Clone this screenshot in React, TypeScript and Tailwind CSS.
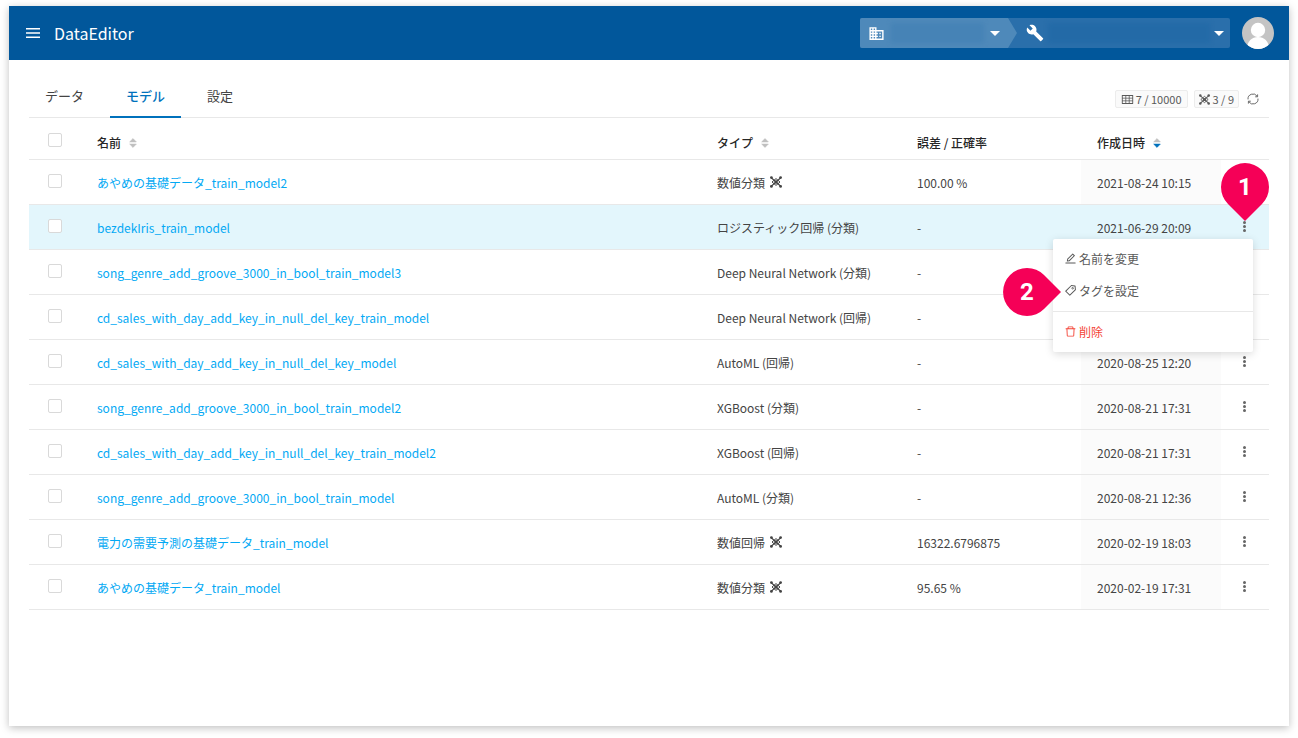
import React from 'react';
import { AiOutlineDelete, AiOutlineEdit, AiOutlineTable, AiOutlineTag } from 'react-icons/ai';
import { MdBuild, MdDomain } from 'react-icons/md';

interface Model {
  name: string;
  type: string;
  network?: boolean;
  score: string;
  createdAt?: string;
  selected?: boolean;
}

const models: Model[] = [
  { name: 'あやめの基礎データ_train_model2', type: '数値分類', network: true, score: '100.00 %', createdAt: '2021-08-24 10:15' },
  { name: 'bezdekIris_train_model', type: 'ロジスティック回帰 (分類)', score: '-', createdAt: '2021-06-29 20:09', selected: true },
  { name: 'song_genre_add_groove_3000_in_bool_train_model3', type: 'Deep Neural Network (分類)', score: '-' },
  { name: 'cd_sales_with_day_add_key_in_null_del_key_train_model', type: 'Deep Neural Network (回帰)', score: '-' },
  { name: 'cd_sales_with_day_add_key_in_null_del_key_model', type: 'AutoML (回帰)', score: '-', createdAt: '2020-08-25 12:20' },
  { name: 'song_genre_add_groove_3000_in_bool_train_model2', type: 'XGBoost (分類)', score: '-', createdAt: '2020-08-21 17:31' },
  { name: 'cd_sales_with_day_add_key_in_null_del_key_train_model2', type: 'XGBoost (回帰)', score: '-', createdAt: '2020-08-21 17:31' },
  { name: 'song_genre_add_groove_3000_in_bool_train_model', type: 'AutoML (分類)', score: '-', createdAt: '2020-08-21 12:36' },
  { name: '電力の需要予測の基礎データ_train_model', type: '数値回帰', network: true, score: '16322.6796875', createdAt: '2020-02-19 18:03' },
  { name: 'あやめの基礎データ_train_model', type: '数値分類', network: true, score: '95.65 %', createdAt: '2020-02-19 17:31' },
];

const NetworkIcon = ({ className }: { className: string }) => (
  <svg viewBox="0 0 12 12" className={className} fill="none" stroke="currentColor" aria-hidden="true">
    <path d="M1 1.5l10 9M11 1.5l-10 9" strokeWidth="1.1" />
    <path d="M6 2.6L10 6 6 9.4 2 6z" strokeWidth="1" />
    <circle cx="6" cy="6" r="1.7" fill="currentColor" stroke="none" />
    <g fill="currentColor" stroke="none">
      <circle cx="1.4" cy="1.6" r="1.4" />
      <circle cx="10.6" cy="1.6" r="1.4" />
      <circle cx="1.4" cy="10.4" r="1.4" />
      <circle cx="10.6" cy="10.4" r="1.4" />
    </g>
  </svg>
);

const ReloadIcon = () => (
  <svg viewBox="0 0 12 12" className="w-3 h-3" fill="none" stroke="currentColor" strokeWidth="0.9" aria-hidden="true">
    <path d="M1 6.4A5 5 0 0 1 10.2 3.3M11 5.6A5 5 0 0 1 1.8 8.7" />
    <path d="M10.6 1.4v2.4H8.2M1.4 10.6V8.2h2.4" />
  </svg>
);

const SortIcon = ({ desc }: { desc?: boolean }) => (
  <svg viewBox="0 0 8 10" className="w-2 h-2.5" strokeLinejoin="round" strokeWidth="0.6" aria-hidden="true">
    <path d="M4 0.6L7.3 3.9H0.7z" fill="#bfbfbf" stroke="#bfbfbf" />
    <path d="M4 9.4L7.3 6.1H0.7z" fill={desc ? '#0071bc' : '#bfbfbf'} stroke={desc ? '#0071bc' : '#bfbfbf'} />
  </svg>
);

const Caret = () => (
  <svg viewBox="0 0 10 5" className="w-2.5 h-[5px] shrink-0" fill="currentColor" aria-hidden="true">
    <path d="M0 0h10L5 5z" />
  </svg>
);

const Checkbox = ({ label }: { label: string }) => (
  <input
    type="checkbox"
    aria-label={label}
    className="appearance-none block w-3.5 h-3.5 ml-[3px] mb-0.5 bg-white border border-[#d9d9d9] rounded-xs checked:bg-[#0071bc]"
  />
);

const Header = () => (
  <header className="h-[54px] bg-[#01579b] text-white flex items-center justify-between pl-[17px] pr-[15px]">
    <div className="flex items-center gap-3.5">
      <button type="button" aria-label="メニュー">
        <svg viewBox="0 0 14 10" className="w-3.5 h-2.5" fill="currentColor" aria-hidden="true">
          <path d="M0 0h14v1.6H0zM0 4.2h14v1.6H0zM0 8.4h14V10H0z" />
        </svg>
      </button>
      <h1 className="text-base">DataEditor</h1>
    </div>
    <div className="flex items-center gap-3">
      <div className="flex h-[30px] rounded-xs overflow-hidden bg-[#2a6fab]">
        <button
          type="button"
          aria-label="組織"
          className="w-[157px] bg-[#4e89ba] flex items-center gap-1.5 pl-2 pr-[17px] [clip-path:polygon(0_0,148px_0,100%_50%,148px_100%,0_100%)]"
        >
          <MdDomain className="w-[17px] h-[17px] shrink-0" />
          <span className="flex-1 h-5 bg-[#4683b6] blur-[2px]" />
          <Caret />
        </button>
        <button type="button" aria-label="プロジェクト" className="w-[213px] flex items-center gap-1 pl-[9px] pr-1.5">
          <MdBuild className="w-[18px] h-[18px] shrink-0" />
          <span className="flex-1 h-5 bg-[#236aa7] blur-[2px]" />
          <Caret />
        </button>
      </div>
      <button type="button" aria-label="アカウント" className="w-8 h-8 rounded-full overflow-hidden">
        <svg viewBox="0 0 32 32" className="w-8 h-8" aria-hidden="true">
          <rect width="32" height="32" fill="#c4c4c4" />
          <circle cx="16" cy="13" r="7.2" fill="#fff" />
          <path d="M5 32c0-8 5-12 11-12s11 4 11 12z" fill="#fff" />
        </svg>
      </button>
    </div>
  </header>
);

const Pin = ({ number, className, shape }: { number: number; className: string; shape: string }) => (
  <div className={`absolute w-12 h-12 flex items-center justify-center ${className}`}>
    <svg viewBox="0 0 48 48" className="absolute w-12 h-12 overflow-visible" aria-hidden="true">
      <path d={shape} fill="#f50057" />
    </svg>
    <span className="relative text-white text-2xl font-bold [font-family:Roboto,sans-serif]">{number}</span>
  </div>
);

const RowMenu = () => (
  <div className="absolute right-4 top-[34px] z-10 w-[200px] py-1 bg-white rounded-xs shadow-[0_2px_8px_rgba(0,0,0,0.15)] text-[#595959]">
    <button type="button" className="w-full h-8 px-[11px] flex items-center gap-0.5">
      <AiOutlineEdit className="w-[13px] h-[13px]" />
      名前を変更
    </button>
    <button type="button" className="w-full h-8 px-[11px] flex items-center gap-0.5">
      <AiOutlineTag className="w-[13px] h-[13px]" />
      タグを設定
    </button>
    <hr className="my-1 border-[#e8e8e8]" />
    <button type="button" className="w-full h-8 px-[11px] flex items-center gap-0.5 text-[#f44336]">
      <AiOutlineDelete className="w-[13px] h-[13px]" />
      削除
    </button>
    <Pin
      number={2}
      className="-left-[50px] top-[29px]"
      shape="M58 24L41 41A24 24 0 1 1 41 7z"
    />
  </div>
);

const ModelRow = ({ model }: { model: Model }) => (
  <tr className={`h-[45px] border-b border-[#e8e8e8] ${model.selected ? 'bg-[#e3f6fc]' : ''}`}>
    <td className="px-4">
      <Checkbox label={`${model.name}を選択`} />
    </td>
    <td className="px-4 pt-0.5">
      <a href="#" className="text-[#03a9f4]">{model.name}</a>
    </td>
    <td className="px-4 pt-0.5">
      <span className="flex items-center gap-[5px]">
        {model.type}
        {model.network && <NetworkIcon className="w-3 h-3 mb-0.5" />}
      </span>
    </td>
    <td className="px-4 pt-0.5">{model.score}</td>
    <td className={`px-4 pt-0.5 ${model.selected ? '' : 'bg-[#fbfbfb]'}`}>{model.createdAt}</td>
    <td className="relative">
      <button type="button" aria-label="操作" className="flex flex-col items-center gap-px w-full pr-px">
        <span className="w-[3px] h-[3px] rounded-full bg-[#666]" />
        <span className="w-[3px] h-[3px] rounded-full bg-[#666]" />
        <span className="w-[3px] h-[3px] rounded-full bg-[#666]" />
      </button>
      {model.selected && (
        <>
          <Pin number={1} className="left-0 -top-[42px]" shape="M24 58L7 41A24 24 0 1 1 41 41z" />
          <RowMenu />
        </>
      )}
    </td>
  </tr>
);

const App: React.FC = () => {
  return (
    <div className="min-h-screen bg-white pt-1.5 px-[9px] pb-3 flex flex-col text-xs text-[#444] [font-family:'Noto_Sans_CJK_JP',sans-serif]">
      <div className="flex-1 flex flex-col bg-white shadow-[0_2px_8px_rgba(0,0,0,0.25)]">
        <Header />
        <main className="flex-1 px-5 pt-[18px]">
          <div className="h-10 border-b border-[#e8e8e8] flex items-start justify-between">
            <nav className="flex gap-2.5 text-[13px]">
              <button type="button" className="h-10 px-4 pb-1">データ</button>
              <button type="button" className="h-10 px-4 pb-0.5 border-b-2 border-[#0071bc] text-[#0071bc] font-medium">モデル</button>
              <button type="button" className="h-10 px-4 pb-1">設定</button>
            </nav>
            <div className="flex items-center gap-1.5 mt-3 text-[11px] text-[#595959]">
              <span className="h-[18px] px-[5px] flex items-center gap-0.5 bg-[#fafafa] border border-[#ececec] rounded-xs">
                <AiOutlineTable className="w-[13px] h-[13px]" />
                7 / 10000
              </span>
              <span className="h-[18px] px-1 flex items-center gap-[3px] bg-[#fafafa] border border-[#ececec] rounded-xs">
                <NetworkIcon className="w-[11px] h-[11px]" />
                3 / 9
              </span>
              <button type="button" aria-label="更新" className="ml-0.5 mr-2.5">
                <ReloadIcon />
              </button>
            </div>
          </div>
          <table className="w-full table-fixed text-left">
            <colgroup>
              <col className="w-[52px]" />
              <col />
              <col className="w-[200px]" />
              <col className="w-[180px]" />
              <col className="w-[140px]" />
              <col className="w-12" />
            </colgroup>
            <thead>
              <tr className="h-[41px] border-b border-[#e8e8e8] text-[#262626]">
                <th className="px-4 pt-1.5">
                  <Checkbox label="すべて選択" />
                </th>
                <th className="px-4 pt-2.5 font-medium">
                  <button type="button" className="flex items-center gap-2">名前<SortIcon /></button>
                </th>
                <th className="px-4 pt-2.5 font-medium">
                  <button type="button" className="flex items-center gap-2">タイプ<SortIcon /></button>
                </th>
                <th className="px-4 pt-2.5 font-medium">誤差 / 正確率</th>
                <th className="px-4 pt-2.5 font-medium">
                  <button type="button" className="flex items-center gap-2">作成日時<SortIcon desc /></button>
                </th>
                <th />
              </tr>
            </thead>
            <tbody>
              {models.map((model) => (
                <ModelRow key={model.name} model={model} />
              ))}
            </tbody>
          </table>
        </main>
      </div>
    </div>
  );
};

export default App;
